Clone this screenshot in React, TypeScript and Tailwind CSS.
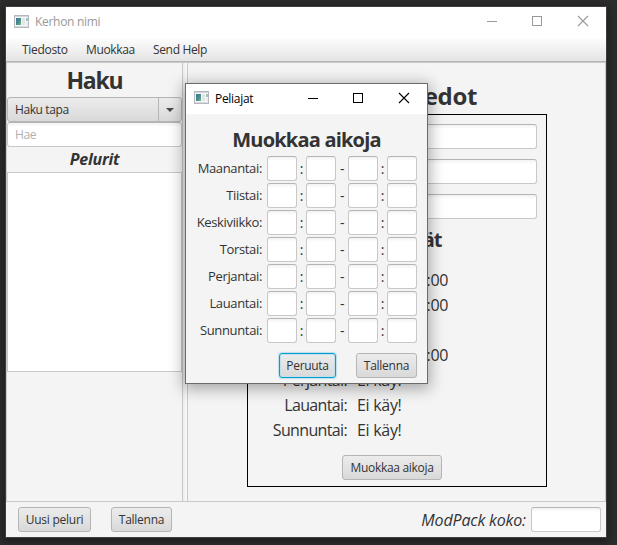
import type { ReactNode } from "react";

const days = ["Maanantai:", "Tiistai:", "Keskiviikko:", "Torstai:", "Perjantai:", "Lauantai:", "Sunnuntai:"];
const times = ["17:00 - 20:00", "17:00 - 20:00", "Ei käy!", "17:00 - 20:00", "Ei käy!", "Ei käy!", "Ei käy!"];

function Field({ className, children }: { className: string; children?: ReactNode }) {
  return (
    <div className={`h-[25px] shrink-0 rounded-[3px] border border-[#c8c8c8] border-t-[#b5b5b5] bg-white bg-linear-to-b from-[#f2f2f2] to-white to-[4px] ${className}`}>
      {children}
    </div>
  );
}

function Button({ className, children }: { className: string; children: ReactNode }) {
  return (
    <button
      className={`flex h-[25px] shrink-0 items-center justify-center whitespace-nowrap rounded-[3px] border bg-linear-to-b from-[#ececec] to-[#d9d9d9] text-[12px] leading-none ${className}`}
    >
      {children}
    </button>
  );
}

function AppIcon() {
  return (
    <svg width="15" height="13" viewBox="0 0 15 13" className="shrink-0" shapeRendering="crispEdges">
      <defs>
        <linearGradient id="pane" x1="0" y1="0" x2="1" y2="1">
          <stop offset="0" stopColor="#4373a0" />
          <stop offset="0.5" stopColor="#468c8b" />
          <stop offset="1" stopColor="#75b77e" />
        </linearGradient>
      </defs>
      <rect x="0.5" y="0.5" width="14" height="12" fill="#f6f7f9" stroke="#b4b8be" />
      <rect x="1" y="1" width="13" height="1" fill="#d3d7dc" />
      <rect x="2" y="3" width="5" height="7" fill="url(#pane)" />
      <rect x="8" y="3" width="3" height="7" fill="#e3e5e8" />
      <rect x="12" y="3" width="2" height="3" fill="#9cc8b0" />
      <rect x="12" y="7" width="2" height="3" fill="#e6ece8" />
      <rect x="1" y="11" width="13" height="1" fill="#d9dde0" />
    </svg>
  );
}

function WindowControls({ color }: { color: string }) {
  return (
    <svg width="104" height="12" viewBox="0 0 104 12" fill="none" stroke={color} className="shrink-0">
      <path d="M0 6.5H10" shapeRendering="crispEdges" />
      <rect x="45.5" y="1.5" width="9" height="9" shapeRendering="crispEdges" />
      <path d="M91 1L101 11M101 1L91 11" strokeWidth="1.1" />
    </svg>
  );
}

function MainWindow() {
  return (
    <div className="flex h-[532px] w-[602px] flex-col border border-[#3f3f3f] bg-[#f4f4f4] shadow-[0_2px_8px_2px_rgba(0,0,0,0.35)]">
      <div className="flex h-[31px] shrink-0 items-center bg-white pl-2 text-[12px] text-[#999999]">
        <div className="-mt-[3px]">
          <AppIcon />
        </div>
        <span className="-mt-[2px] ml-[6px] tracking-[-0.3px]">Kerhon nimi</span>
        <div className="-mt-[3px] ml-auto pr-[15px]">
          <WindowControls color="#999999" />
        </div>
      </div>
      <div className="flex h-[24px] shrink-0 items-center border-b border-[#b5b5b5] bg-linear-to-b from-[#fdfdfd] to-[#e4e4e4] pl-4 text-[12px]">
        <span className="w-[64px] tracking-[-0.3px]">Tiedosto</span>
        <span className="w-[67px] tracking-[-0.35px]">Muokkaa</span>
        <span className="tracking-[-0.35px]">Send Help</span>
      </div>
      <div className="flex h-[440px] shrink-0 border border-[#c8c8c8]">
        <SearchPane />
        <div className="w-[6px] shrink-0 border-x border-[#c8c8c8] bg-linear-to-r from-[#ececec] to-[#fafafa]" />
        <DetailsPane />
      </div>
      <div className="flex h-[35px] shrink-0 items-center pl-3 pr-[5px]">
        <Button className="w-[73px] border-[#b5b5b5] tracking-[-0.25px]">Uusi peluri</Button>
        <Button className="ml-5 w-[61px] border-[#b5b5b5] tracking-[-0.25px]">Tallenna</Button>
        <span className="ml-auto mr-[5px] text-[16px] italic leading-none tracking-[-0.15px]">ModPack koko:</span>
        <Field className="w-[70px]" />
      </div>
    </div>
  );
}

function SearchPane() {
  return (
    <div className="flex w-[175px] shrink-0 flex-col">
      <h1 className="h-[34px] text-center text-[23px] font-bold leading-[34px] tracking-[-1.2px]">Haku</h1>
      <div className="flex h-[25px] shrink-0 items-center rounded-[3px] border border-[#b5b5b5] bg-linear-to-b from-[#ececec] to-[#d9d9d9] text-[12px]">
        <span className="flex-1 pl-[7px] tracking-[-0.4px]">Haku tapa</span>
        <span className="flex h-full w-[23px] items-center justify-center border-l border-[#b5b5b5]">
          <svg width="8" height="4" viewBox="0 0 8 4">
            <path d="M0 0H8L4 4Z" fill="#4b4b4b" />
          </svg>
        </span>
      </div>
      <Field className="flex w-full items-center pl-[7px] text-[12px] tracking-[-0.4px] text-[#b0b0b0]">Hae</Field>
      <h2 className="h-[25px] text-center text-[16px] font-bold italic leading-[25px] tracking-[-0.2px]">Pelurit</h2>
      <div className="h-[200px] w-full border border-[#c8c8c8] bg-white" />
    </div>
  );
}

function DetailsPane() {
  return (
    <div className="flex flex-1 flex-col items-center pl-px pt-[16px]">
      <h1 className="h-[35px] whitespace-nowrap text-[24px] font-bold leading-[34px] tracking-[-0.35px]">Pelurin tiedot</h1>
      <div className="flex h-[373px] w-[300px] shrink-0 flex-col items-center border border-black px-[9px] pt-[9px]">
        <div className="flex w-full flex-col gap-[10px]">
          <Field className="w-full" />
          <Field className="w-full" />
          <Field className="w-full" />
        </div>
        <h2 className="mt-[7px] h-[28px] text-[20px] font-bold leading-[28px] tracking-[-1.1px]">Pelipäivät</h2>
        <div className="mt-[14px] grid w-full grid-cols-[90px_1fr] gap-x-[10px] text-[16px] leading-[25px]">
          {days.map((day, i) => (
            <div key={day} className="contents">
              <span className="text-right tracking-[-0.65px]">{day}</span>
              <span className="tracking-[-0.3px]">{times[i]}</span>
            </div>
          ))}
        </div>
        <Button className="mt-[12px] mr-[10px] w-[100px] border-[#b5b5b5] tracking-[-0.3px]">Muokkaa aikoja</Button>
      </div>
    </div>
  );
}

function TimesDialog() {
  return (
    <div className="absolute left-[185px] top-[83px] flex h-[301px] w-[243px] flex-col border border-[#6b6b6b] bg-[#f4f4f4] shadow-[0_3px_14px_2px_rgba(0,0,0,0.32)]">
      <div className="flex h-[30px] shrink-0 items-center bg-white pl-2 text-[12px] text-black">
        <div className="-mt-[3px]">
          <AppIcon />
        </div>
        <span className="ml-[6px] tracking-[-0.3px]">Peliajat</span>
        <div className="-mt-[2px] ml-auto pr-[15px]">
          <WindowControls color="#000000" />
        </div>
      </div>
      <h1 className="mt-[10px] h-[32px] text-center text-[20px] font-bold leading-[31px] tracking-[-0.8px]">Muokkaa aikoja</h1>
      <div className="flex flex-col gap-[2px]">
        {days.map((day) => (
          <div key={day} className="flex h-[25px] items-center text-[13px] leading-[25px] tracking-[-0.35px]">
            <span className="w-[76px] text-right">{day}</span>
            <Field className="ml-[5px] w-[30px]" />
            <span className="w-[9px] text-center text-[14px]">:</span>
            <Field className="w-[30px]" />
            <span className="w-[12px] text-center text-[14px]">-</span>
            <Field className="w-[30px]" />
            <span className="w-[9px] text-center text-[14px]">:</span>
            <Field className="w-[30px]" />
          </div>
        ))}
      </div>
      <div className="mt-[10px] flex justify-end gap-5 pr-[10px]">
        <Button className="w-[57px] border-[#039ed3] tracking-[-0.3px] shadow-[0_0_1px_1px_#b9dfee,inset_0_0_0_1px_#c5dde6]">Peruuta</Button>
        <Button className="w-[61px] border-[#b5b5b5] tracking-[-0.25px]">Tallenna</Button>
      </div>
    </div>
  );
}

export default function App() {
  return (
    <div className="relative h-[545px] w-[617px] overflow-hidden bg-[#2d2d2d] pl-[5px] pt-[6px] font-['Open_Sans','Noto_Sans',sans-serif] text-[#333333]">
      <MainWindow />
      <TimesDialog />
    </div>
  );
}
